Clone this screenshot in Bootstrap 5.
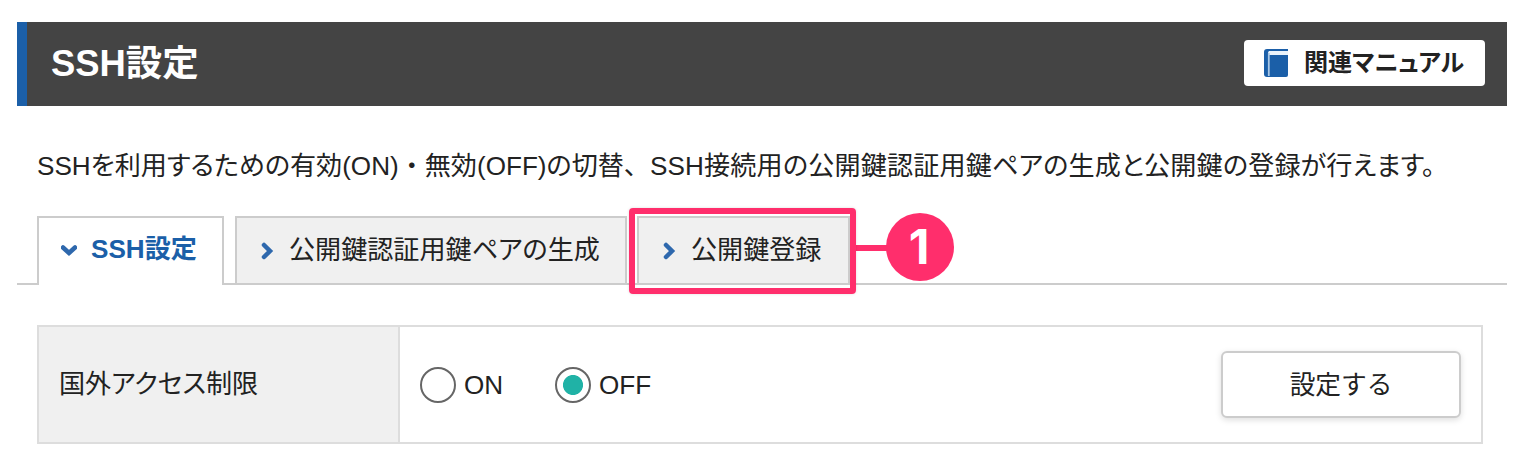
<!DOCTYPE html>
<html lang="ja">
<head>
<meta charset="utf-8">
<meta name="viewport" content="width=device-width, initial-scale=1">
<title>SSH設定</title>
<link href="https://cdn.jsdelivr.net/npm/bootstrap@5.3.0/dist/css/bootstrap.min.css" rel="stylesheet">
<style>
body{font-family:"Liberation Sans","Noto Sans CJK JP",sans-serif;font-size:26.1px;line-height:40px;color:#222;background:#fff;font-feature-settings:"palt";padding:22px 17px 0;overflow:hidden}
.page-head{height:84px;background:#444;border-left:10px solid #1b5fa8;padding:0 22px 0 24px}
.page-head h1{font-size:36.4px;font-weight:700;line-height:84px}
.btn-manual{width:241px;height:46px;margin-bottom:2px;background:#fff;border-radius:4px;font-weight:700;font-size:24.1px;line-height:46px;color:#222;padding:0 0 0 20px;text-decoration:none;white-space:nowrap}
.btn-manual svg{margin-right:16px}
.lead-text{height:110px;padding:40px 0 0 20px;white-space:nowrap}
.full-punct{font-feature-settings:normal}
.lead-second{letter-spacing:.16px}
.tab-bar{height:69px;border-bottom:2px solid #ccc;padding-left:20px;flex-wrap:nowrap}
.tab-bar .nav-link{height:67px;border:2px solid #ccc;border-bottom:0;border-radius:0;background:#f0f0f0;color:#222;padding:0 0 2px 23px;display:flex;align-items:center;white-space:nowrap}
.tab-bar .nav-link.active{height:69px;background:#fff;color:#1b5fa8;font-weight:700;padding:0 0 5px 22px}
.t1{width:187px;margin-right:11px}.t2{width:392px;margin-right:10px}.t3{width:213px}
.chev{width:16px;height:18px;margin:2px 13px 0 0;flex:none}
.active .chev{margin-right:14px}
.hilite{left:-8px;top:-8px;width:227px;height:86px;border:6px solid #ff2e6c;border-radius:4px;box-shadow:0 0 3px #0002}
.connector{left:219px;top:29px;width:34px;height:6px;background:#ff2e6c}
.step{left:249px;top:-3px;width:68px;height:68px;background:#ff2e6c;color:#fff;font:700 48px/67px "Inter",sans-serif;text-indent:-2px}
.setting{margin:40px 24px 0 20px;height:119px;border:2px solid #ddd}
.setting-label{width:361px;background:#f0f0f0;border-right:2px solid #ddd;padding:0 0 2px 20px}
.setting-body{padding:0 20px}
.choice-on{width:135px}
.form-check-input.radio-lg{width:36px;height:36px;margin:0 8px 0 0;float:none;border:2px solid #666;background:#fff}
.form-check-input.radio-lg:checked{background:radial-gradient(circle,#20b2a6 9.6px,#fff 10.4px)}
.btn-set{width:240px;height:67px;border:2px solid #ccc;border-radius:6px;background:#fff;box-shadow:0 2px 6px #0002;font-size:25.7px;color:#222;padding:1px 0 0}
</style>
</head>
<body>
<header class="page-head d-flex align-items-center justify-content-between">
  <h1 class="m-0 text-white">SSH設定</h1>
  <a href="#" class="btn-manual d-flex align-items-center"><svg width="24" height="28" viewBox="0 0 24 28"><path d="M3 0H24V26Q24 28 22 28H3Q0 28 0 25V3Q0 0 3 0Z" fill="#1b5fa8"/><path d="M5 2H24V6H5Q3 4 5 2Z" fill="#eaf3fb"/><path d="M4.800 4V27" stroke="#a9c8e6" stroke-width="1.800"/></svg><span>関連マニュアル</span></a>
</header>
<p class="lead-text m-0">SSHを利用するための有効(ON)<span class="full-punct">・</span>無効(OFF)の切替<span class="full-punct">、</span><span class="lead-second">SSH接続用の公開鍵認証用鍵ペアの生成と公開鍵の登録が行えます。</span></p>
<ul class="nav tab-bar">
  <li class="nav-item t1"><a class="nav-link active" href="#"><svg class="chev" viewBox="0 0 16 18"><path d="M2 6.500L8 12L14 6.500" fill="none" stroke="#2e68ad" stroke-width="4.500" stroke-linecap="round"/></svg>SSH設定</a></li>
  <li class="nav-item t2"><a class="nav-link" href="#"><svg class="chev" viewBox="0 0 16 18"><path d="M4 3L10 9L4 15" fill="none" stroke="#2e68ad" stroke-width="4.500" stroke-linecap="round"/></svg>公開鍵認証用鍵ペアの生成</a></li>
  <li class="nav-item t3 position-relative"><a class="nav-link" href="#"><svg class="chev" viewBox="0 0 16 18"><path d="M4 3L10 9L4 15" fill="none" stroke="#2e68ad" stroke-width="4.500" stroke-linecap="round"/></svg>公開鍵登録</a>
    <span class="connector position-absolute"></span><span class="hilite position-absolute"></span><span class="step position-absolute rounded-circle text-center">1</span></li>
</ul>
<div class="setting d-flex">
  <div class="setting-label d-flex align-items-center">国外アクセス制限</div>
  <div class="setting-body flex-grow-1 d-flex align-items-center justify-content-between">
    <div class="d-flex">
      <label class="choice-on d-flex align-items-center"><input class="form-check-input radio-lg" type="radio" name="access">ON</label>
      <label class="d-flex align-items-center"><input class="form-check-input radio-lg" type="radio" name="access" checked>OFF</label>
    </div>
    <button class="btn btn-set" type="button">設定する</button>
  </div>
</div>
<script src="https://cdn.jsdelivr.net/npm/bootstrap@5.3.0/dist/js/bootstrap.bundle.min.js"></script>
</body>
</html>
